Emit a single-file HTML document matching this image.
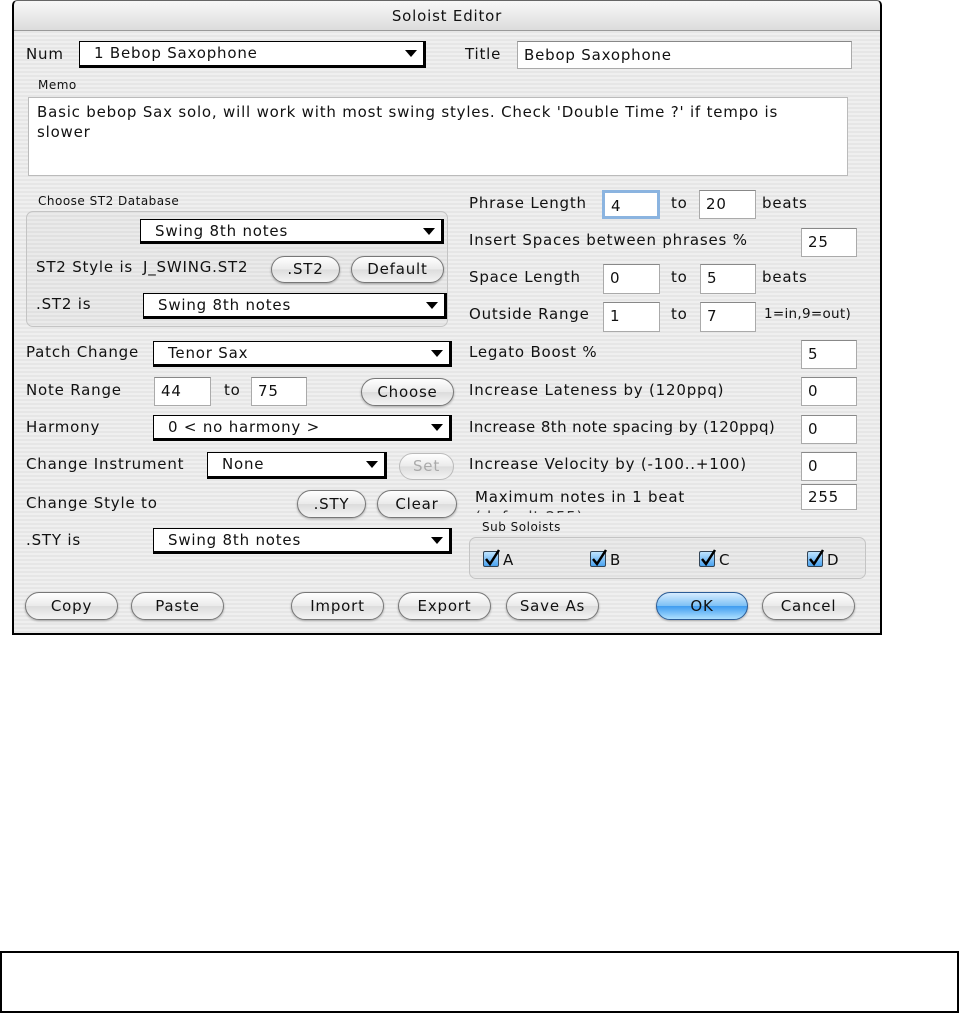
<!DOCTYPE html>
<html><head><meta charset="utf-8"><style>
*{box-sizing:border-box;margin:0;padding:0}
body{width:960px;height:1013px;background:#fff;position:relative;font-family:"DejaVu Sans","Liberation Sans",sans-serif;font-size:15px;letter-spacing:0.8px;color:#111;overflow:hidden}
#dlg{position:absolute;left:12px;top:0;width:870px;height:635px;border:2px solid #000;border-top:1px solid #666;background:repeating-linear-gradient(#efefef 0 2px,#e6e6e6 2px 4px);border-radius:5px 5px 0 0}
#tb{position:absolute;left:0;top:0;right:0;height:30px;background:linear-gradient(#f8f8f8,#dcdcdc);border-bottom:1px solid #999;text-align:center;line-height:30px;font-size:15px;border-radius:5px 5px 0 0}
.a{position:absolute;white-space:nowrap}
.l{position:absolute;white-space:nowrap;line-height:16px}
.sm{font-size:12px;letter-spacing:0.5px}
.dd{position:absolute;background:#fff;border:1px solid #000;border-right:3px solid #000;border-bottom:3px solid #000;padding-left:14px;line-height:22px}
.dd:after{content:"";position:absolute;right:6px;top:8px;border-left:6px solid transparent;border-right:6px solid transparent;border-top:7px solid #000}
.in{position:absolute;background:#fff;border:1px solid #aaa;border-top-color:#888;padding-left:6px;line-height:26px}
.bt{position:absolute;background:linear-gradient(#fff,#eaeaea 50%,#dcdcdc 51%,#f4f4f4);border:1px solid #777;border-radius:14px;text-align:center;box-shadow:0 1px 2px rgba(0,0,0,.3)}
.grp{position:absolute;border:1px solid #c4c4c4;border-radius:7px;background:rgba(0,0,0,.02)}
.cb{position:absolute;width:16px;height:16px;border:1px solid #345;background:linear-gradient(#bfe4ff,#4aa3f0);border-radius:2px}
.cb svg{position:absolute;left:0;top:-4px}
</style></head><body>
<div id="dlg">
<div id="tb">Soloist Editor</div>
</div>
<div class="l" style="left:26px;top:46px">Num</div>
<div class="dd" style="left:79px;top:41px;width:347px;height:27px">1 Bebop Saxophone</div>
<div class="l" style="left:465px;top:46px">Title</div>
<div class="in" style="left:517px;top:41px;width:335px;height:28px">Bebop Saxophone</div>
<div class="l sm" style="left:38px;top:77px">Memo</div>
<div class="in" style="left:28px;top:97px;width:820px;height:79px;line-height:20px;padding:4px 8px;white-space:normal;border-color:#bbb">Basic bebop Sax solo, will work with most swing styles. Check 'Double Time ?' if tempo is<br>slower</div>
<div class="l sm" style="left:38px;top:193px">Choose ST2 Database</div>
<div class="grp" style="left:26px;top:211px;width:422px;height:116px"></div>
<div class="dd" style="left:140px;top:219px;width:304px;height:25px">Swing 8th notes</div>
<div class="l" style="left:36px;top:259px">ST2 Style is</div>
<div class="l" style="left:143px;top:259px">J_SWING.ST2</div>
<div class="bt" style="left:271px;top:256px;width:69px;height:27px;line-height:25px">.ST2</div>
<div class="bt" style="left:351px;top:256px;width:93px;height:27px;line-height:25px">Default</div>
<div class="l" style="left:36px;top:296px">.ST2 is</div>
<div class="dd" style="left:143px;top:293px;width:304px;height:26px">Swing 8th notes</div>

<div class="l" style="left:26px;top:344px">Patch Change</div>
<div class="dd" style="left:153px;top:341px;width:299px;height:26px">Tenor Sax</div>
<div class="l" style="left:26px;top:382px">Note Range</div>
<div class="in" style="left:154px;top:377px;width:57px;height:29px">44</div>
<div class="l" style="left:224px;top:382px">to</div>
<div class="in" style="left:251px;top:377px;width:56px;height:29px">75</div>
<div class="bt" style="left:361px;top:378px;width:93px;height:28px;line-height:26px">Choose</div>
<div class="l" style="left:26px;top:419px">Harmony</div>
<div class="dd" style="left:153px;top:415px;width:299px;height:26px">0 &lt; no harmony &gt;</div>
<div class="l" style="left:26px;top:456px">Change Instrument</div>
<div class="dd" style="left:207px;top:452px;width:180px;height:27px">None</div>
<div class="bt" style="left:399px;top:453px;width:55px;height:27px;line-height:25px;color:#aaa;border-color:#bbb;box-shadow:none">Set</div>
<div class="l" style="left:26px;top:495px">Change Style to</div>
<div class="bt" style="left:297px;top:490px;width:69px;height:28px;line-height:26px">.STY</div>
<div class="bt" style="left:377px;top:490px;width:80px;height:28px;line-height:26px">Clear</div>
<div class="l" style="left:26px;top:532px">.STY is</div>
<div class="dd" style="left:153px;top:528px;width:299px;height:26px">Swing 8th notes</div>

<div class="l" style="left:469px;top:195px">Phrase Length</div>
<div class="in" style="left:602px;top:190px;width:58px;height:29px;border:3px solid #8bb4e0">4</div>
<div class="l" style="left:671px;top:195px">to</div>
<div class="in" style="left:699px;top:190px;width:57px;height:29px">20</div>
<div class="l" style="left:762px;top:195px">beats</div>
<div class="l" style="left:469px;top:232px">Insert Spaces between phrases %</div>
<div class="in" style="left:801px;top:228px;width:56px;height:29px">25</div>
<div class="l" style="left:469px;top:269px">Space Length</div>
<div class="in" style="left:603px;top:264px;width:57px;height:30px">0</div>
<div class="l" style="left:671px;top:269px">to</div>
<div class="in" style="left:700px;top:264px;width:56px;height:30px">5</div>
<div class="l" style="left:762px;top:269px">beats</div>
<div class="l" style="left:469px;top:306px">Outside Range</div>
<div class="in" style="left:603px;top:302px;width:57px;height:30px">1</div>
<div class="l" style="left:671px;top:306px">to</div>
<div class="in" style="left:700px;top:302px;width:56px;height:30px">7</div>
<div class="l" style="left:764px;top:306px;font-size:13.5px;letter-spacing:0.3px">1=in,9=out)</div>
<div class="l" style="left:469px;top:344px">Legato Boost %</div>
<div class="in" style="left:801px;top:340px;width:56px;height:29px">5</div>
<div class="l" style="left:469px;top:382px">Increase Lateness by (120ppq)</div>
<div class="in" style="left:801px;top:377px;width:56px;height:29px">0</div>
<div class="l" style="left:469px;top:419px;letter-spacing:0.4px">Increase 8th note spacing by (120ppq)</div>
<div class="in" style="left:801px;top:415px;width:56px;height:29px">0</div>
<div class="l" style="left:469px;top:456px">Increase Velocity by (-100..+100)</div>
<div class="in" style="left:801px;top:452px;width:56px;height:29px">0</div>
<div class="l" style="left:475px;top:489px">Maximum notes in 1 beat</div>
<div class="a" style="left:475px;top:510px;width:200px;height:3px;overflow:hidden;line-height:14px;color:#333">(default 255)</div>
<div class="in" style="left:801px;top:484px;width:56px;height:26px;line-height:24px">255</div>
<div class="l sm" style="left:482px;top:519px">Sub Soloists</div>
<div class="grp" style="left:469px;top:537px;width:397px;height:42px"></div>
<div class="cb" style="left:483px;top:551px"><svg width="18" height="20"><path d="M2 11 L6 16 L15 2" stroke="#000" stroke-width="2.5" fill="none"/></svg></div><div class="l" style="left:503px;top:552px">A</div>
<div class="cb" style="left:590px;top:551px"><svg width="18" height="20"><path d="M2 11 L6 16 L15 2" stroke="#000" stroke-width="2.5" fill="none"/></svg></div><div class="l" style="left:610px;top:552px">B</div>
<div class="cb" style="left:699px;top:551px"><svg width="18" height="20"><path d="M2 11 L6 16 L15 2" stroke="#000" stroke-width="2.5" fill="none"/></svg></div><div class="l" style="left:719px;top:552px">C</div>
<div class="cb" style="left:807px;top:551px"><svg width="18" height="20"><path d="M2 11 L6 16 L15 2" stroke="#000" stroke-width="2.5" fill="none"/></svg></div><div class="l" style="left:827px;top:552px">D</div>

<div class="bt" style="left:25px;top:592px;width:93px;height:28px;line-height:26px">Copy</div>
<div class="bt" style="left:131px;top:592px;width:93px;height:28px;line-height:26px">Paste</div>
<div class="bt" style="left:291px;top:592px;width:93px;height:28px;line-height:26px">Import</div>
<div class="bt" style="left:398px;top:592px;width:93px;height:28px;line-height:26px">Export</div>
<div class="bt" style="left:506px;top:592px;width:93px;height:28px;line-height:26px">Save As</div>
<div class="bt" style="left:656px;top:592px;width:92px;height:28px;line-height:26px;background:linear-gradient(#d6ecff,#7cc0f5 50%,#3f9cf0 51%,#aee0ff);border-color:#2b5c96">OK</div>
<div class="bt" style="left:762px;top:592px;width:93px;height:28px;line-height:26px">Cancel</div>

<div class="a" style="left:0;top:951px;width:959px;height:62px;border:2px solid #000;background:#fff"></div>
</body></html>
